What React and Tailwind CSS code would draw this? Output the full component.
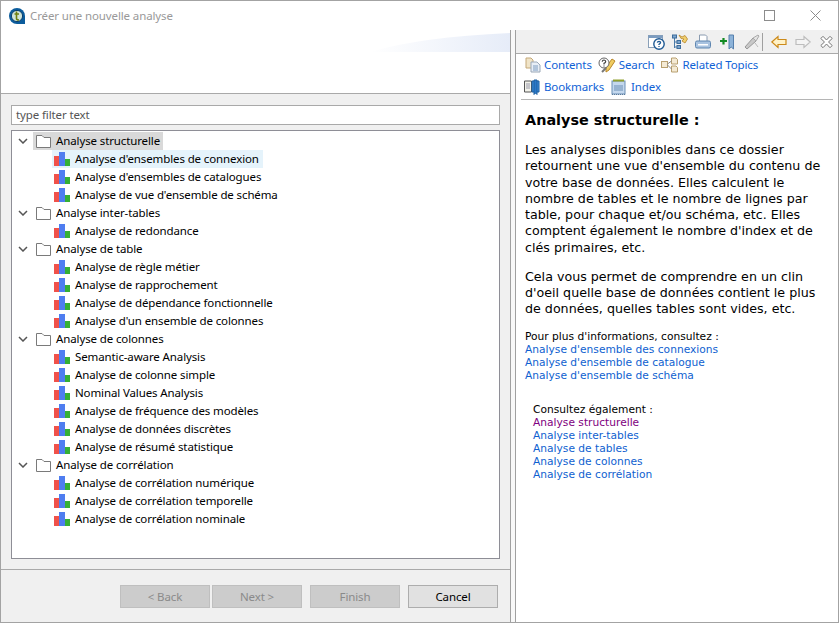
import React from "react";

const sans = "font-['Noto_Sans','Open_Sans',sans-serif]";
const verdana = "font-['DejaVu_Sans',sans-serif]";
const uiText = "text-[11.5px] tracking-[-0.12px]";

const tree = [
  ["Analyse structurelle", ["Analyse d'ensembles de connexion", "Analyse d'ensembles de catalogues", "Analyse de vue d'ensemble de schéma"]],
  ["Analyse inter-tables", ["Analyse de redondance"]],
  ["Analyse de table", ["Analyse de règle métier", "Analyse de rapprochement", "Analyse de dépendance fonctionnelle", "Analyse d'un ensemble de colonnes"]],
  ["Analyse de colonnes", ["Semantic-aware Analysis", "Analyse de colonne simple", "Nominal Values Analysis", "Analyse de fréquence des modèles", "Analyse de données discrètes", "Analyse de résumé statistique"]],
  ["Analyse de corrélation", ["Analyse de corrélation numérique", "Analyse de corrélation temporelle", "Analyse de corrélation nominale"]],
];

function Bars() {
  return (
    <svg width="16" height="14" viewBox="0 0 16 14" className="shrink-0">
      <rect x="0" y="4" width="5" height="10" fill="#f0524a" />
      <rect x="5" y="0" width="6" height="14" fill="#4f7df0" />
      <rect x="11" y="7" width="5" height="7" fill="#35b035" />
    </svg>
  );
}

function Folder() {
  return (
    <svg width="16" height="14" viewBox="0 0 16 14" className="shrink-0">
      <path d="M0.5 13.5V1.5H6L8 3.5H14.5V13.5Z" fill="#fff" stroke="#7a7a7a" />
    </svg>
  );
}

function Chevron() {
  return (
    <svg width="10" height="6" viewBox="0 0 10 6" className="shrink-0">
      <path d="M1 1L5 5L9 1" fill="none" stroke="#555" strokeWidth="1.5" />
    </svg>
  );
}

function Logo() {
  return (
    <svg width="16" height="16" viewBox="0 0 16 16">
      <path d="M8 0a8 8 0 1 0 0 16h8V8a8 8 0 0 0-8-8Z" fill="#0b5c9c" />
      <circle cx="8" cy="8" r="5.6" fill="#cfe3d8" stroke="#0b3f70" />
      <path d="M7.5 3.5V10.5Q7.5 12 10 12M5.5 6H10" fill="none" stroke="#6e7f10" strokeWidth="1.6" />
    </svg>
  );
}

const I = ({ children, w = 16 }) => (
  <svg width={w} height="16" viewBox={`0 0 ${w} 16`} className="shrink-0">{children}</svg>
);

const HelpIcon = () => (
  <I w={17}>
    <rect x="0.5" y="1.5" width="14" height="12" fill="#fff" stroke="#8aa0b8" />
    <rect x="0.5" y="1.5" width="14" height="2.5" fill="#7c9cc0" />
    <circle cx="11" cy="10" r="5.2" fill="#fff" stroke="#1f5a94" strokeWidth="1.4" />
    <path d="M9.3 8.7Q9.5 7.3 11 7.3Q12.6 7.4 12.6 8.6Q12.6 9.5 11 10.3V11M11 12V13" fill="none" stroke="#1f5a94" strokeWidth="1.3" />
  </I>
);
const SyncIcon = () => (
  <I>
    <path d="M2.5 3V14M2.5 8H6M2.5 13H6" stroke="#4a7aa8" fill="none" />
    <rect x="0.5" y="1" width="4" height="3" fill="#7fa5cc" stroke="#3d6d9c" />
    <rect x="5" y="6.5" width="3.5" height="3" fill="#7fa5cc" stroke="#3d6d9c" />
    <rect x="5" y="11.5" width="3.5" height="3" fill="#7fa5cc" stroke="#3d6d9c" />
    <path d="M7 1L10 3L13 1.5L15.5 5L13 9L10 7L12 5L9 4.5Z" fill="#f0d070" stroke="#b8862a" strokeWidth="0.8" />
  </I>
);
const PrintIcon = () => (
  <I>
    <path d="M4.5 1H10.5L12 2.5V8H4.5Z" fill="#fff" stroke="#8a9bb0" />
    <rect x="0.5" y="7" width="15" height="7" rx="1.5" fill="#a9c3e0" stroke="#5f86b0" />
    <rect x="3" y="10" width="10" height="1.5" fill="#fff" />
  </I>
);
const BookmarkAddIcon = () => (
  <I w={17}>
    <path d="M11 1H15.5V15L13.2 13L11 15Z" fill="#8db3d9" stroke="#5680ad" />
    <path d="M2 7H9M5.5 4V10.5" stroke="#128a22" strokeWidth="2.2" fill="none" />
  </I>
);
const SyncGrayIcon = () => (
  <I w={16}>
    <path d="M3 15L1 13L9 4L12 7Z" fill="#c8c8c8" stroke="#999" />
    <path d="M9 4L14 1L15 2L12 7Z" fill="#e4e4e4" stroke="#aaa" />
    <path d="M11 9L14 13" stroke="#bbb" />
  </I>
);
const BackIcon = () => (
  <I>
    <path d="M0.8 8L7 2.5V5.5H15V10.5H7V13.5Z" fill="#fff2c8" stroke="#cc8a1a" strokeWidth="1.2" />
  </I>
);
const ForwardIcon = () => (
  <I>
    <path d="M15.2 8L9 2.5V5.5H1V10.5H9V13.5Z" fill="#f4f4f4" stroke="#bdbdbd" strokeWidth="1.2" />
  </I>
);
const CloseIcon = () => (
  <I w={13}>
    <path d="M0.8 3L3 0.8L6.5 4.5L10 0.8L12.2 3L8.5 6.5L12.2 10L10 12.2L6.5 8.5L3 12.2L0.8 10L4.5 6.5Z" transform="translate(0 1.5)" fill="#fff" stroke="#777" />
  </I>
);

const ContentsIcon = () => (
  <I w={16}>
    <path d="M1 1H6L8 3V11H1Z" fill="#f0e4c8" stroke="#c4a878" />
    <path d="M6 5H12L15 8V15H6Z" fill="#e8eef6" stroke="#9aa8b8" />
    <path d="M8 9H13M8 11H13M8 13H13" stroke="#7c9cc0" />
  </I>
);
const SearchIcon = () => (
  <I w={18}>
    <path d="M8 10L14 2L17 4L11 13L8 15Z" fill="#f0cc60" stroke="#b8862a" />
    <circle cx="6" cy="6" r="5" fill="#fff" stroke="#666" />
    <path d="M4.2 4.7Q4.4 3 6 3Q7.8 3.2 7.7 4.6Q7.6 5.6 6 6.4V7.5M6 8.5V9.5" fill="none" stroke="#444" strokeWidth="1.2" />
    <path d="M4 15L8 11" stroke="#777" strokeWidth="2" />
  </I>
);
const RelatedIcon = () => (
  <I w={18}>
    <rect x="0.5" y="4.5" width="6" height="6" fill="#f4ead4" stroke="#b8a070" />
    <path d="M10.5 1H15L16.5 2.5V7H10.5Z" fill="#f4ead4" stroke="#b8a070" />
    <path d="M10.5 9H15L16.5 10.5V15H10.5Z" fill="#f4ead4" stroke="#b8a070" />
    <path d="M6.5 7L10.5 4M6.5 8L10.5 12" stroke="#888" />
  </I>
);
const BookIcon = () => (
  <I w={16}>
    <path d="M0.5 2H7.5V13H0.5Z" fill="#f2f2ea" stroke="#555" />
    <path d="M2 5H6M2 7H6M2 9H6" stroke="#99a" />
    <path d="M8 2H15V13H8Z" fill="#3d8fe0" stroke="#1d5f9f" />
    <path d="M10 1H13V15.5L11.5 14L10 15.5Z" fill="#2a78c8" stroke="#1d5f9f" />
  </I>
);
const IndexIcon = () => (
  <I w={15}>
    <rect x="1" y="2" width="13" height="13" fill="#c4d8ee" stroke="#6b8fb5" />
    <path d="M2 1.5H13" stroke="#90a030" strokeWidth="2" />
    <path d="M3 7H12M3 9H12M3 11H12" stroke="#6b8fb5" />
    <path d="M1 15.5H14" stroke="#5a7a9c" strokeDasharray="1 1" />
  </I>
);

function Label({ children }) {
  return <span className="text-[#0f62d6] leading-[16px]">{children}</span>;
}

function WizardButton({ label, disabled }) {
  return (
    <div
      className={
        disabled
          ? "w-[90px] h-[23px] flex items-center justify-center bg-[#cccccc] border border-[#bfbfbf] text-[#8a8a8a]"
          : "w-[90px] h-[23px] flex items-center justify-center bg-[#e1e1e1] border border-[#adadad] text-black"
      }
    >
      {label}
    </div>
  );
}

const A = ({ children, purple }) => (
  <div className={purple ? "text-[#800080]" : "text-[#0f5fd0]"}>{children}</div>
);

export default function App() {
  return (
    <div className={`${sans} ${uiText} w-[839px] h-[623px] border border-[#a3a3a3] bg-white flex flex-col overflow-hidden`}>
      <div className="h-[29px] shrink-0 flex items-center relative">
        <div className="ml-[8px] w-[16px] h-[16px]"><Logo /></div>
        <span className="ml-[5px] text-[#999999]">Créer une nouvelle analyse</span>
        <div className="absolute right-[63px] top-[9px] w-[11px] h-[11px] border border-[#8c8c8c]" />
        <svg width="11" height="11" viewBox="0 0 11 11" className="absolute right-[17px] top-[9px]">
          <path d="M0.5 0.5L10.5 10.5M10.5 0.5L0.5 10.5" stroke="#8c8c8c" />
        </svg>
      </div>

      <div className="flex-1 flex min-h-0">
        <div className="w-[510px] shrink-0 flex flex-col border-r border-[#a0a0a0]">
          <div className="h-[64px] shrink-0 border-b border-[#a9a9a9] relative">
            <svg width="140" height="20" viewBox="0 0 140 20" className="absolute right-0 top-[2px]">
              <defs>
                <linearGradient id="g" x1="0" y1="0" x2="1" y2="0">
                  <stop offset="0" stopColor="#ffffff" />
                  <stop offset="1" stopColor="#e6ecf8" />
                </linearGradient>
              </defs>
              <path d="M0 20Q50 5 140 1V20Z" fill="url(#g)" />
            </svg>
          </div>
          <div className="flex-1 bg-[#f0f0f0] flex flex-col min-h-0">
            <div className="px-[10px] pt-[11px]">
              <div className="h-[20px] bg-white border border-[#a9a9a9] flex items-center pl-[4px] text-[#555]">
                type filter text
              </div>
              <div className="mt-[5px] h-[429px] bg-white border border-[#8e8e96] pt-[1px] text-black">
                {tree.map(([cat, items], ci) => (
                  <div key={cat}>
                    <div className="h-[18px] flex items-center">
                      <div className="w-[21px] pl-[6px] flex items-center"><Chevron /></div>
                      <div className={`h-[18px] flex items-center pl-[3px] pr-[3px] gap-[4px] ${ci === 0 ? "bg-[#d9d9d9]" : ""}`}>
                        <Folder />
                        <span>{cat}</span>
                      </div>
                    </div>
                    {items.map((it, ii) => (
                      <div key={it} className="h-[18px] flex items-center pl-[40px]">
                        <div className={`h-[18px] flex items-center pl-[2px] pr-[4px] gap-[5px] ${ci === 0 && ii === 0 ? "bg-[#e5f3fb]" : ""}`}>
                          <Bars />
                          <span>{it}</span>
                        </div>
                      </div>
                    ))}
                  </div>
                ))}
              </div>
            </div>
            <div className="mt-[10px] border-t border-[#a9a9a9] flex-1 flex justify-end pr-[12px] pt-[15px]">
              <WizardButton label="< Back" disabled />
              <div className="w-[2px]" />
              <WizardButton label="Next >" disabled />
              <div className="w-[8px]" />
              <WizardButton label="Finish" disabled />
              <div className="w-[8px]" />
              <WizardButton label="Cancel" />
            </div>
          </div>
        </div>

        <div className="w-[4px] shrink-0 bg-[#f8f8f8]" />

        <div className="flex-1 min-w-0 flex flex-col border-l border-[#a0a0a0]">
          <div className="h-[24px] shrink-0 bg-[#f0f0f0] border-b border-[#a9a9a9] flex items-center justify-end pr-[5px]">
            <HelpIcon />
            <div className="w-[7px]" />
            <SyncIcon />
            <div className="w-[7px]" />
            <PrintIcon />
            <div className="w-[7px]" />
            <BookmarkAddIcon />
            <div className="w-[9px]" />
            <SyncGrayIcon />
            <div className="w-[2px]" />
            <div className="w-px h-[18px] bg-[#a0a0a0]" />
            <div className="w-[8px]" />
            <BackIcon />
            <div className="w-[8px]" />
            <ForwardIcon />
            <div className="w-[9px]" />
            <CloseIcon />
          </div>
          <div className="mx-[5px] h-[46px] shrink-0 border-b border-[#b5b5b5] pl-[4px] pt-[3px] flex flex-col gap-[6px]">
            <div className="flex items-center">
              <ContentsIcon />
              <div className="w-[3px]" />
              <Label>Contents</Label>
              <div className="w-[6px]" />
              <SearchIcon />
              <div className="w-[3px]" />
              <Label>Search</Label>
              <div className="w-[7px]" />
              <RelatedIcon />
              <div className="w-[3px]" />
              <Label>Related Topics</Label>
            </div>
            <div className="flex items-center -ml-[1px]">
              <BookIcon />
              <div className="w-[4px]" />
              <Label>Bookmarks</Label>
              <div className="w-[7px]" />
              <IndexIcon />
              <div className="w-[5px]" />
              <Label>Index</Label>
            </div>
          </div>
          <div className={`${verdana} tracking-normal pl-[9px] pt-[11px] text-black`}>
            <div className="text-[14.4px] leading-[18px] font-bold">Analyse structurelle :</div>
            <p className="mt-[13px] text-[12.67px] leading-[16.25px] w-[308px]">
              Les analyses disponibles dans ce dossier retournent une vue d'ensemble du contenu de votre base de données. Elles calculent le nombre de tables et le nombre de lignes par table, pour chaque et/ou schéma, etc. Elles comptent également le nombre d'index et de clés primaires, etc.
            </p>
            <p className="mt-[13px] text-[12.67px] leading-[16.25px] w-[308px]">
              Cela vous permet de comprendre en un clin d'oeil quelle base de données contient le plus de données, quelles tables sont vides, etc.
            </p>
            <div className="mt-[12px] text-[10.67px] leading-[13px]">
              <div>Pour plus d'informations, consultez :</div>
              <A>Analyse d'ensemble des connexions</A>
              <A>Analyse d'ensemble de catalogue</A>
              <A>Analyse d'ensemble de schéma</A>
            </div>
            <div className="mt-[21px] ml-[8px] text-[10.67px] leading-[13px]">
              <div>Consultez également :</div>
              <A purple>Analyse structurelle</A>
              <A>Analyse inter-tables</A>
              <A>Analyse de tables</A>
              <A>Analyse de colonnes</A>
              <A>Analyse de corrélation</A>
            </div>
          </div>
        </div>
      </div>
    </div>
  );
}
